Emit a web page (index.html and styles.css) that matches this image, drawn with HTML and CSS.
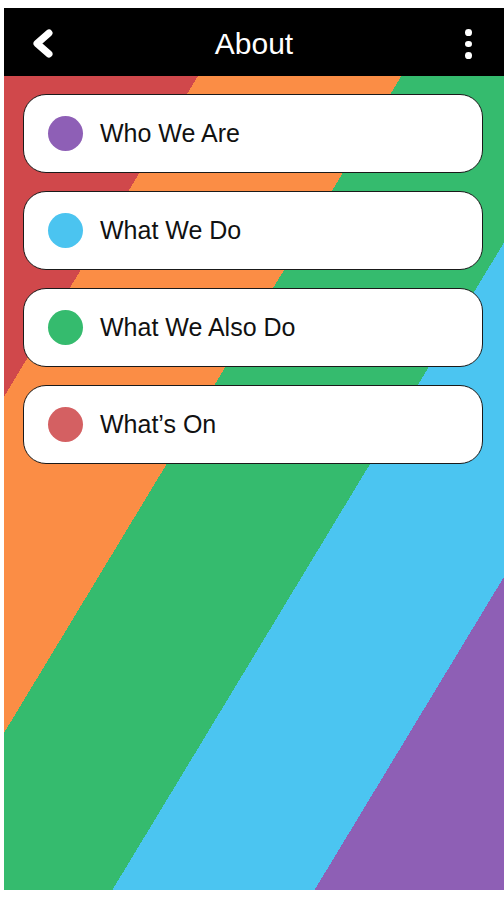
FILE: index.html
```html
<!DOCTYPE html>
<html lang="en">
<head>
<meta charset="utf-8">
<title>About</title>
<link rel="stylesheet" href="styles.css">
</head>
<body>
<div class="phone">
  <header class="topbar">
    <button class="icon-btn back" aria-label="Back">
      <svg width="26" height="30" viewBox="0 0 26 30"><path d="M19 4 L7 14.5 L19 25" fill="none" stroke="#fff" stroke-width="7" stroke-linejoin="round" stroke-linecap="round"/></svg>
    </button>
    <h1 class="title">About</h1>
    <button class="icon-btn more" aria-label="More">
      <span class="dot"></span><span class="dot"></span><span class="dot"></span>
    </button>
  </header>
  <main class="content">
    <ul class="menu">
      <li class="item"><span class="bullet purple"></span><span class="label">Who We Are</span></li>
      <li class="item"><span class="bullet blue"></span><span class="label">What We Do</span></li>
      <li class="item"><span class="bullet green"></span><span class="label">What We Also Do</span></li>
      <li class="item"><span class="bullet red"></span><span class="label">What’s On</span></li>
    </ul>
  </main>
</div>
</body>
</html>
```
FILE: styles.css
```css
* { box-sizing: border-box; }
html, body { margin: 0; padding: 0; background: #fff; }
body { font-family: "Liberation Sans", Arial, sans-serif; }

.phone {
  margin: 8px 0 0 4px;
  width: 500px;
  height: 882px;
  display: flex;
  flex-direction: column;
}

.topbar {
  height: 68px;
  flex: none;
  background: #000;
  display: flex;
  align-items: center;
  justify-content: space-between;
  padding: 4px 22px 0 26px;
}
.icon-btn {
  background: none;
  border: 0;
  padding: 0;
  display: flex;
  align-items: center;
  justify-content: center;
}
.back { width: 30px; height: 30px; justify-content: flex-start; }
.title {
  margin: 0;
  color: #fff;
  font-weight: normal;
  font-size: 30px;
  line-height: 1;
  padding-right: 4px;
}
.more {
  width: 30px;
  height: 30px;
  flex-direction: column;
  gap: 5px;
  padding-left: 3px;
}
.dot { width: 7px; height: 7px; border-radius: 50%; background: #fff; }

.content {
  flex: 1;
  padding: 18px 0 0 19px;
  background: linear-gradient(121.17deg,
    #d0484b 0 166px,
    #fb8d45 166px 340px,
    #35bb6e 340px 514px,
    #4bc5f1 514px 687px,
    #8e5fb5 687px);
}

.menu {
  list-style: none;
  margin: 0;
  padding: 0;
  display: flex;
  flex-direction: column;
  gap: 18px;
}
.item {
  width: 460px;
  height: 79px;
  background: #fff;
  border: 1px solid #1a1a1a;
  border-radius: 23px;
  display: flex;
  align-items: center;
  padding-left: 24px;
  gap: 17px;
}
.bullet { width: 35px; height: 35px; border-radius: 50%; flex: none; }
.purple { background: #8e5fb6; }
.blue { background: #4bc4f0; }
.green { background: #35bb6e; }
.red { background: #d46062; }
.label { font-size: 25px; color: #111; line-height: 1; }
```
